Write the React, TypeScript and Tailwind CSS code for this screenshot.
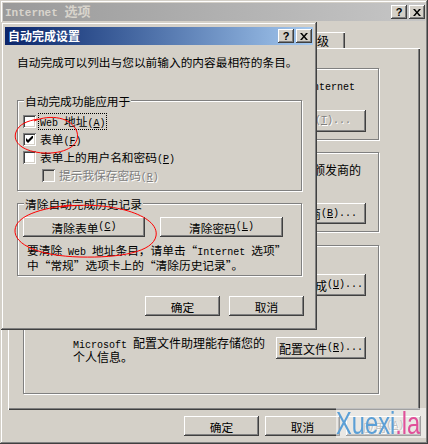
import React from 'react';

const RAISED =
  'shadow-[inset_-1px_-1px_#404040,inset_1px_1px_#ffffff,inset_-2px_-2px_#808080,inset_2px_2px_#d4d0c8]';
const FRAME =
  'shadow-[inset_-1px_-1px_#404040,inset_1px_1px_#d4d0c8,inset_-2px_-2px_#808080,inset_2px_2px_#ffffff]';

function L({ children }: { children: React.ReactNode }) {
  return <span className="font-['Liberation_Mono',monospace] text-[10px] leading-[10px]">{children}</span>;
}
function Acc({ c }: { c: string }) {
  return (
    <span className="font-['Liberation_Mono',monospace] text-[10px] leading-[10px]">
      (<u>{c}</u>)
    </span>
  );
}

function Btn({
  className,
  children,
  disabled,
}: {
  className: string;
  children: React.ReactNode;
  disabled?: boolean;
}) {
  return (
    <div
      className={`flex shrink-0 items-center justify-center whitespace-nowrap bg-[#d4d0c8] ${RAISED} ${
        disabled ? 'text-[#808080] [text-shadow:1px_1px_0_#ffffff]' : ''
      } ${className}`}
    >
      {children}
    </div>
  );
}

function TitleBtns() {
  return (
    <div className="flex gap-[2px]">
      <div className={`flex h-[14px] w-[16px] items-center justify-center bg-[#d4d0c8] ${RAISED}`}>
        <span className="font-['Liberation_Sans',sans-serif] text-[11px] font-bold leading-[11px] text-black">?</span>
      </div>
      <div className={`flex h-[14px] w-[16px] items-center justify-center bg-[#d4d0c8] ${RAISED}`}>
        <svg width="8" height="7" viewBox="0 0 8 7">
          <path d="M0 0h2l2 2.4 2-2.4h2l-3 3.5 3 3.5h-2l-2-2.4-2 2.4h-2l3-3.5z" fill="#000" />
        </svg>
      </div>
    </div>
  );
}

function Group({
  label,
  className,
  children,
}: {
  label: string;
  className: string;
  children?: React.ReactNode;
}) {
  return (
    <div
      className={`flex shrink-0 flex-col border border-[#808080] shadow-[1px_1px_0_#ffffff,inset_1px_1px_0_#ffffff] ${className}`}
    >
      <div className="-mt-[7px] ml-[6px] h-[13px] self-start whitespace-nowrap bg-[#d4d0c8] px-[1px] leading-[13px]">
        {label}
      </div>
      {children}
    </div>
  );
}

function Check({ checked, disabled }: { checked?: boolean; disabled?: boolean }) {
  return (
    <div
      className={`flex h-[13px] w-[13px] shrink-0 items-center justify-center ${
        disabled ? 'bg-[#d4d0c8]' : 'bg-white'
      } shadow-[inset_1px_1px_#808080,inset_-1px_-1px_#ffffff,inset_2px_2px_#404040,inset_-2px_-2px_#d4d0c8]`}
    >
      {checked && (
        <svg width="7" height="7" viewBox="0 0 7 7">
          <path d="M0 2 L2 4 L7 -1 L7 2 L2 7 L0 5 Z" fill="#000" />
        </svg>
      )}
    </div>
  );
}

function Tab({ children, className }: { children: React.ReactNode; className: string }) {
  return (
    <div
      className={`flex h-[16px] items-center bg-[#d4d0c8] shadow-[inset_1px_1px_#ffffff,inset_-1px_0_#404040,inset_-2px_0_#808080] ${className}`}
    >
      {children}
    </div>
  );
}

function BackWindow() {
  return (
    <div className={`absolute left-0 top-0 flex h-[444px] w-[428px] flex-col bg-[#d4d0c8] p-[3px] ${FRAME}`}>
      <div className="flex h-[18px] shrink-0 items-center bg-linear-to-r from-[#9a9a9a] to-[#c6c6c6] pl-[2px]">
        <div className="flex-1 whitespace-nowrap font-bold leading-[18px] text-[#d8d4cc]">
          <span className="font-['Liberation_Mono',monospace] text-[11px]">Internet </span>
          <span className="text-[13px]">选项</span>
        </div>
        <TitleBtns />
      </div>
      <div className="flex flex-col pl-[5px] text-[12px]">
        <div className="ml-[4px] mt-[11px] flex h-[16px] items-end">
          <Tab className="w-[57px] justify-center">常规</Tab>
          <Tab className="w-[57px] justify-center">安全</Tab>
          <Tab className="w-[57px] justify-center">内容</Tab>
          <Tab className="w-[57px] justify-center">连接</Tab>
          <Tab className="w-[57px] justify-center">程序</Tab>
          <Tab className="w-[48px] justify-start pl-[8px]">高级</Tab>
        </div>
        <div className="flex h-[362px] w-[412px] flex-col shadow-[inset_1px_1px_#ffffff,inset_-1px_-1px_#404040,inset_-2px_-2px_#808080]">
          <div className="ml-[15px] mt-[20px] flex flex-col">
            <Group label="分级审查" className="h-[72px] w-[356px]">
              <div className="mt-[3px] h-[26px] whitespace-nowrap pl-[49px]">
                <div>
                  分级审查帮助您控制在计算机上可以查看的<L> Internet</L>
                </div>
                <div>内容。</div>
              </div>
              <div className="mt-[6px] flex justify-end gap-[6px] pr-[12px]">
                <Btn className="h-[22px] w-[90px]">
                  启用<Acc c="E" />
                  <L>...</L>
                </Btn>
                <Btn className="h-[22px] w-[90px]" disabled>
                  设置<Acc c="T" />
                  <L>...</L>
                </Btn>
              </div>
            </Group>
            <Group label="证书" className="mt-[12px] h-[80px] w-[356px]">
              <div className="mt-[4px] h-[26px] whitespace-nowrap pl-[49px]">
                <div>使用证书可以确定您自己、证书颁发机构以及颁发商的</div>
                <div>身份。</div>
              </div>
              <div className="mt-[14px] flex justify-end gap-[6px] pr-[12px]">
                <Btn className="h-[21px] w-[90px]">
                  证书<Acc c="C" />
                  <L>...</L>
                </Btn>
                <Btn className="h-[21px] w-[90px]">
                  发行商<Acc c="B" />
                  <L>...</L>
                </Btn>
              </div>
            </Group>
            <Group label="个人信息" className="mt-[13px] h-[149px] w-[356px]">
              <div className="mt-[22px] flex h-[22px] items-start justify-between pr-[12px]">
                <div className="whitespace-nowrap pl-[49px]">
                  <div>自动完成存储以前的输入并</div>
                  <div>提供匹配建议。</div>
                </div>
                <Btn className="h-[22px] w-[90px]">
                  自动完成<Acc c="U" />
                  <L>...</L>
                </Btn>
              </div>
              <div className="mt-[41px] flex h-[22px] items-start justify-between pr-[12px]">
                <div className="whitespace-nowrap pl-[49px] leading-[12px]">
                  <div>
                    <L>Microsoft </L>配置文件助理能存储您的
                  </div>
                  <div>个人信息。</div>
                </div>
                <Btn className="h-[22px] w-[90px]">
                  配置文件<Acc c="R" />
                  <L>...</L>
                </Btn>
              </div>
            </Group>
          </div>
        </div>
        <div className="mt-[6px] flex justify-end gap-[6px] pr-[4px] text-[11.7px]">
          <Btn className="h-[20px] w-[75px]">确定</Btn>
          <Btn className="h-[20px] w-[75px]">取消</Btn>
          <Btn className="h-[20px] w-[75px]" disabled>
            应用<Acc c="A" />
          </Btn>
        </div>
      </div>
    </div>
  );
}

function FrontDialog() {
  return (
    <div
      className={`absolute left-[1px] top-[22px] flex h-[308px] w-[316px] flex-col bg-[#d4d0c8] px-[4px] pt-[5px] ${FRAME}`}
    >
      <div className="flex h-[18px] shrink-0 items-center bg-linear-to-r from-[#0a246a] to-[#a6caf0] pl-[3px] pr-[1px]">
        <div className="flex-1 whitespace-nowrap text-[12px] font-bold leading-[18px] text-white">自动完成设置</div>
        <TitleBtns />
      </div>
      <div className="flex flex-col px-[12px]">
        <div className="mt-[10px] h-[13px] whitespace-nowrap">自动完成可以列出与您以前输入的内容最相符的条目。</div>
        <Group label="自动完成功能应用于" className="mt-[32px] h-[91px] w-[285px]">
          <div className="mt-[8px] flex flex-col gap-[5px] pl-[5px]">
            <div className="flex h-[13px] items-center gap-[3px]">
              <Check />
              <span className="whitespace-nowrap px-[1px] outline-1 outline-dotted outline-black">
                <L>Web </L>地址<Acc c="A" />
              </span>
            </div>
            <div className="flex h-[13px] items-center gap-[3px]">
              <Check checked />
              <span className="whitespace-nowrap px-[1px]">
                表单<Acc c="F" />
              </span>
            </div>
            <div className="flex h-[13px] items-center gap-[3px]">
              <Check />
              <span className="whitespace-nowrap px-[1px]">
                表单上的用户名和密码<Acc c="P" />
              </span>
            </div>
            <div className="ml-[19px] flex h-[13px] items-center gap-[3px]">
              <Check disabled />
              <span className="whitespace-nowrap px-[1px] text-[#808080] [text-shadow:1px_1px_0_#ffffff]">
                提示我保存密码<Acc c="R" />
              </span>
            </div>
          </div>
        </Group>
        <Group label="清除自动完成历史记录" className="mt-[12px] h-[73px] w-[285px]">
          <div className="mt-[7px] flex gap-[15px] pl-[5px]">
            <Btn className="h-[20px] w-[122px]">
              清除表单<Acc c="C" />
            </Btn>
            <Btn className="h-[20px] w-[123px]">
              清除密码<Acc c="L" />
            </Btn>
          </div>
          <div className="mt-[6px] whitespace-nowrap pl-[9px]">
            <div>
              要清除<L> Web </L>地址条目，请单击“<L>Internet </L>选项”
            </div>
            <div>中“常规”选项卡上的“清除历史记录”。</div>
          </div>
        </Group>
        <div className="ml-[128px] mt-[20px] flex gap-[9px]">
          <Btn className="h-[20px] w-[75px]">确定</Btn>
          <Btn className="h-[20px] w-[75px]">取消</Btn>
        </div>
      </div>
    </div>
  );
}

function Watermark() {
  return (
    <div className="absolute left-[336px] top-[408px] flex h-[30px] w-[90px] items-center bg-white/50">
      <div className="origin-left scale-x-[0.74] whitespace-nowrap font-['Liberation_Sans',sans-serif] text-[32px] leading-[30px]">
        <span className="text-[#5b9fd6]">Xuexi</span>
        <span className="text-[#e0509a]">.la</span>
      </div>
    </div>
  );
}

export default function App() {
  return (
    <div className="relative h-[444px] w-[428px] overflow-hidden bg-[#d4d0c8] font-['Noto_Sans_CJK_SC',sans-serif] text-[11.7px] leading-[13px] text-black">
      <BackWindow />
      <FrontDialog />
      <Watermark />
      <svg className="pointer-events-none absolute left-0 top-0" width="428" height="444" viewBox="0 0 428 444">
        <path
          d="M34 121 C50 114, 72 117, 77 132 C81 147, 62 154, 44 153 C24 152, 12 143, 16 132 C19 124, 27 121, 38 119"
          fill="none"
          stroke="#ff0000"
          strokeWidth="1"
        />
        <path
          d="M60 207 C110 200, 160 215, 156 236 C153 252, 120 258, 80 257 C40 256, 14 245, 15 230 C16 216, 40 208, 72 205"
          fill="none"
          stroke="#ff0000"
          strokeWidth="1"
        />
      </svg>
    </div>
  );
}
